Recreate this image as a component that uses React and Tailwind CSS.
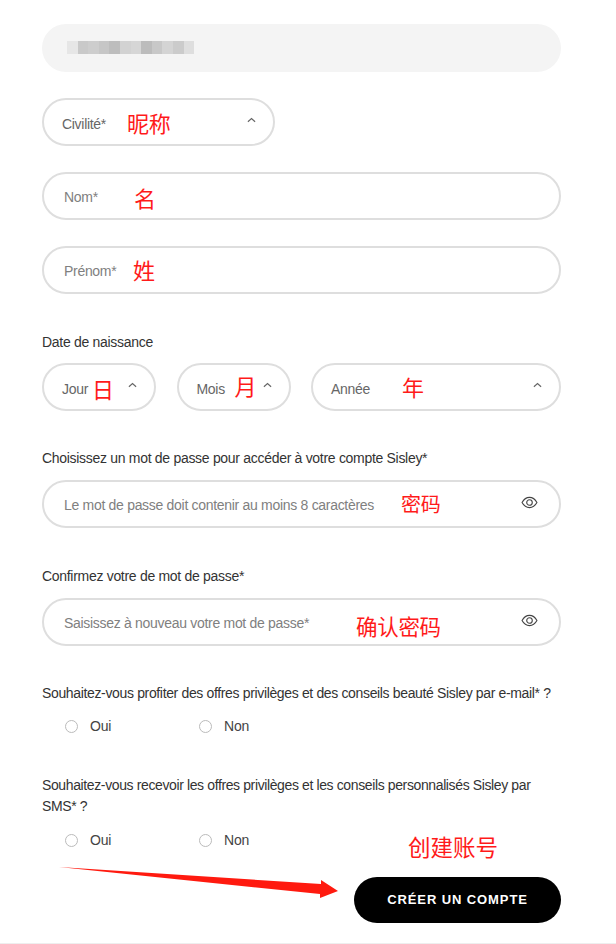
import React from 'react';

const CJK = "font-['Noto_Sans_CJK_SC',sans-serif] text-[#ff1a1a]";

const blurBlocks = ['#e6e6e6', '#c9c9c9', '#cdcdcd', '#c6c6c6', '#bdbdbd', '#d2d2d2', '#d6d6d6', '#bcbcbc', '#c8c8c8', '#d4d4d4', '#cbcbcb', '#dedede'];

const Chevron = ({ className = '' }) => (
    <svg viewBox="0 0 10 6" className={`w-[9px] h-[6px] ${className}`} fill="none" stroke="#666" strokeWidth="1.3">
        <path d="M1 5l4-3.6L9 5" />
    </svg>
);

const Eye = () => (
    <svg viewBox="0 0 18 14" className="w-[17px] h-[13px] absolute right-[21px] top-[14px]" fill="none" stroke="#444" strokeWidth="1.2">
        <path d="M1 7c2-3.600 4.800-5.500 8-5.500S15 3.400 17 7c-2 3.600-4.800 5.500-8 5.500S3 10.600 1 7z" />
        <circle cx="9" cy="7" r="3" />
    </svg>
);

// note = red annotation written over the field
const Note = ({ children, className = '' }) => (
    <span className={`absolute whitespace-nowrap ${CJK} ${className}`}>{children}</span>
);

const Select = ({ label, note, noteClass, className }) => (
    <div className={`relative h-12 rounded-full border-2 border-[#dedede] bg-white flex items-center justify-between pl-[18px] pr-[17px] text-[#666] text-sm tracking-[-0.3px] ${className}`}>
        <span className="mt-[3px]">{label}</span>
        <Chevron className="mb-[4px]" />
        <Note className={noteClass}>{note}</Note>
    </div>
);

const Field = ({ label, eye, children }) => (
    <div className="relative h-12 rounded-full border-2 border-[#dedede] bg-white flex items-center pl-5 text-[#808080] text-sm tracking-[-0.3px]">
        <span className="mt-px">{label}</span>
        {eye && <Eye />}
        {children}
    </div>
);

const Radios = () => (
    <div className="flex items-center h-5 pl-[23px] text-[#444] text-sm tracking-[-0.2px]">
        <span className="w-[13px] h-[13px] rounded-full border border-[#bbb] mt-px" />
        <span className="ml-[12px] w-[109px]">Oui</span>
        <span className="w-[13px] h-[13px] rounded-full border border-[#bbb] mt-px" />
        <span className="ml-[12px]">Non</span>
    </div>
);

const App = () => {
    return (
        <div className="relative w-[616px] h-[944px] bg-white overflow-hidden font-['Liberation_Sans',sans-serif] border-b border-[#eee]">
            <div className="px-[42px] pt-6 w-[603px]">
                <div className="h-12 rounded-full bg-[#f4f4f4] flex items-center pl-[25px]">
                    <div className="flex h-[13px] mb-[2px]">
                        {blurBlocks.map((c, i) => (
                            <div key={i} className="w-[10.600px] h-full" style={{ background: c }} />
                        ))}
                    </div>
                </div>

                <Select label="Civilité*" note="昵称" noteClass="left-[83px] top-[6px] text-[22px] leading-[32px]" className="w-[233px] mt-[26px]" />

                <div className="mt-[26px]">
                    <Field label="Nom*">
                        <Note className="left-[90px] top-[7px] text-[22px] leading-[32px]">名</Note>
                    </Field>
                </div>
                <div className="mt-[26px]">
                    <Field label="Prénom*">
                        <Note className="left-[89px] top-[5px] text-[22px] leading-[32px]">姓</Note>
                    </Field>
                </div>

                <p className="mt-[38px] text-sm leading-5 text-[#333] tracking-[-0.3px]">Date de naissance</p>
                <div className="flex justify-between mt-[11px]">
                    <Select label="Jour" note="日" noteClass="left-[48px] top-[7px] text-[22px] leading-[32px]" className="w-[114px]" />
                    <Select label="Mois" note="月" noteClass="left-[56px] top-[4px] text-[22px] leading-[32px]" className="w-[114px]" />
                    <Select label="Année" note="年" noteClass="left-[89px] top-[5px] text-[22px] leading-[32px]" className="w-[250px]" />
                </div>

                <p className="mt-[37px] text-sm leading-5 text-[#333] tracking-[-0.3px]">Choisissez un mot de passe pour accéder à votre compte Sisley*</p>
                <div className="mt-3">
                    <Field label="Le mot de passe doit contenir au moins 8 caractères" eye>
                        <Note className="left-[357px] top-[6px] text-[20px] leading-[32px]">密码</Note>
                    </Field>
                </div>

                <p className="mt-[38px] text-sm leading-5 text-[#333] tracking-[-0.3px]">Confirmez votre de mot de passe*</p>
                <div className="mt-3">
                    <Field label="Saisissez à nouveau votre mot de passe*" eye>
                        <Note className="left-[312px] top-[10px] text-[21.500px] leading-[32px]">确认密码</Note>
                    </Field>
                </div>

                <p className="mt-[37px] text-sm leading-5 text-[#333] tracking-[-0.35px] whitespace-nowrap">Souhaitez-vous profiter des offres privilèges et des conseils beauté Sisley par e-mail* ?</p>
                <div className="mt-[13px]"><Radios /></div>

                <p className="mt-[39px] text-sm leading-[21px] text-[#333] tracking-[-0.38px]">Souhaitez-vous recevoir les offres privilèges et les conseils personnalisés Sisley par<br />SMS* ?</p>
                <div className="mt-[13px]"><Radios /></div>

                <div className="flex justify-end mt-[27px]">
                    <button type="button" className="w-[207px] h-[46px] rounded-full bg-black text-white text-[13px] font-bold tracking-[0.9px]">CRÉER UN COMPTE</button>
                </div>
            </div>

            <Note className="left-[408px] top-[830px] text-[22.500px] leading-[32px]">创建账号</Note>
            <svg viewBox="0 0 616 944" className="absolute inset-0 w-[616px] h-[944px] pointer-events-none">
                <path d="M59 867l262 17v-4l17 11-18 7v-4z" fill="#ff1a0f" />
            </svg>
        </div>
    );
};

export default App;
